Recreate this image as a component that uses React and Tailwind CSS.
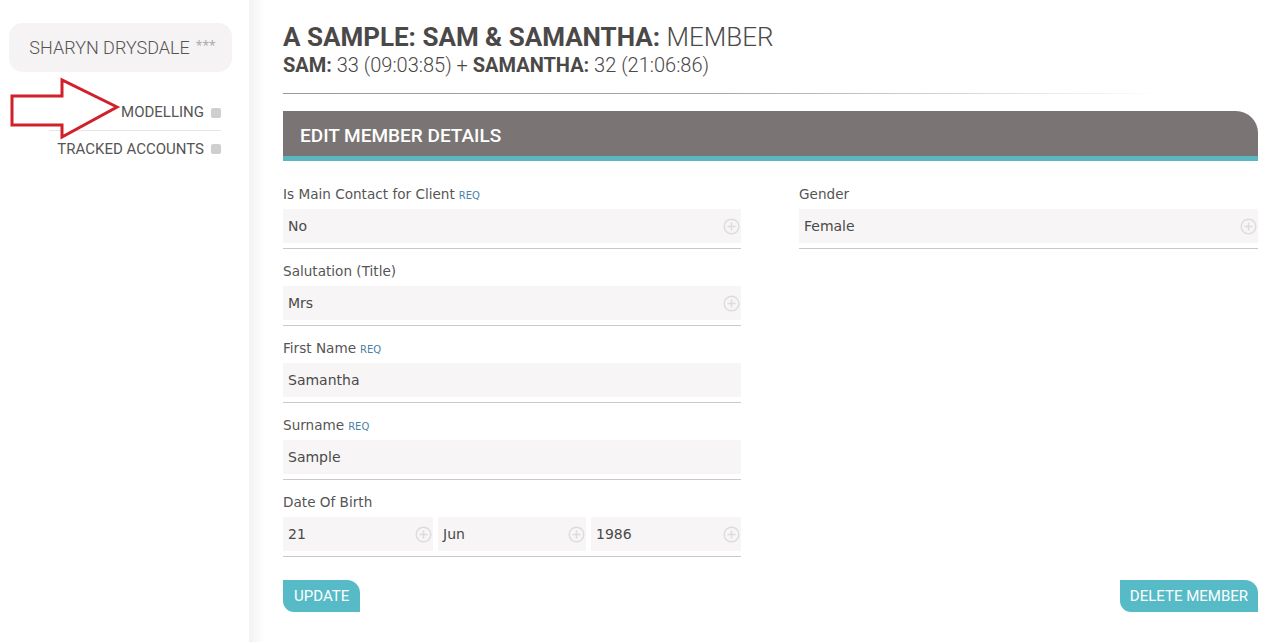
import React from "react";

const head = { fontFamily: "Roboto, 'Open Sans', sans-serif" };
const body = { fontFamily: "'DejaVu Sans', Verdana, sans-serif" };

function PlusCircle() {
  return (
    <svg width="17" height="17" viewBox="0 0 17 17" fill="none" aria-hidden="true">
      <circle cx="8.5" cy="8.5" r="7.3" stroke="#dcdcdc" strokeWidth="1.4" />
      <path d="M8.5 4.5v8M4.5 8.5h8" stroke="#dcdcdc" strokeWidth="1.4" />
    </svg>
  );
}

function Box({ value, select, className = "" }) {
  return (
    <div
      className={`h-[34px] bg-[#f7f5f5] flex items-center justify-between pl-[5px] pr-[1px] text-[14px] text-[#4a4a4a] ${className}`}
      style={body}
    >
      <span>{value}</span>
      {select && <PlusCircle />}
    </div>
  );
}

function Field({ label, req, value, select, children }) {
  return (
    <div className="mb-[14px]">
      <div className="h-[16px] leading-[16px] text-[13.6px] text-[#555] mb-[7px] whitespace-nowrap" style={body}>
        {label}
        {req && <span className="ml-[4px] text-[10px] text-[#4c7fa8]">REQ</span>}
      </div>
      <div className="border-b border-[#c9c9c9] pb-[5px]">
        {children || <Box value={value} select={select} />}
      </div>
    </div>
  );
}

function NavItem({ label, divider }) {
  return (
    <div className={`flex items-center justify-end gap-[7px] h-[36px] ${divider ? "border-b border-[#e6e6e6]" : ""}`}>
      <span className="text-[15px] text-[#555] uppercase whitespace-nowrap" style={head}>
        {label}
      </span>
      <span className="w-[10px] h-[10px] rounded-[2px] bg-[#cfcfcf]" />
    </div>
  );
}

export default function App() {
  return (
    <div className="w-[1279px] h-[642px] flex bg-white overflow-hidden">
      {/* ============ SIDEBAR ============ */}
      <aside className="relative w-[249px] shrink-0 bg-white pt-[23px] pl-[9px] pr-[17px]">
        <div className="h-[49px] rounded-[14px] bg-[#f5f3f4] flex items-center justify-center pl-[4px]">
          <span className="text-[18px] text-[#555] font-light" style={head}>
            SHARYN DRYSDALE
          </span>
          <span className="ml-[6px] text-[12px] text-[#aaa] -mt-[4px]">***</span>
        </div>
        <nav className="ml-[40px] mr-[11px] mt-[23px]">
          <NavItem label="Modelling" divider />
          <NavItem label="Tracked Accounts" />
        </nav>

        {/* red annotation arrow */}
        <svg
          className="absolute left-[8px] top-[76px]"
          width="115"
          height="66"
          viewBox="0 0 115 66"
          aria-hidden="true"
        >
          <polygon
            points="4,20 54,20 54,4 109,31 54,61 54,49 4,49"
            fill="white"
            stroke="#d2202b"
            strokeWidth="3"
            strokeLinejoin="miter"
          />
        </svg>
      </aside>

      {/* shadow strip */}
      <div className="w-[16px] shrink-0 bg-gradient-to-r from-[#f2f2f2] to-white" />

      {/* ============ MAIN ============ */}
      <main className="flex-1 pl-[18px] pr-[21px] pt-[22px]">
        <h1 className="text-[26px] leading-[31px] text-[#4b4848] font-bold" style={head}>
          A SAMPLE: SAM &amp; SAMANTHA: <span className="font-light">MEMBER</span>
        </h1>
        <p className="text-[20px] leading-[24px] text-[#4b4848] font-light" style={head}>
          <span className="font-bold">SAM:</span> 33 (09:03:85) +{" "}
          <span className="font-bold">SAMANTHA:</span> 32 (21:06:86)
        </p>
        <div className="mt-[16px] h-px w-[880px] bg-gradient-to-r from-[#9a9a9a] via-[#a8a8a8] to-transparent" />

        <div className="mt-[17px] h-[50px] bg-[#7a7574] rounded-tr-[22px] border-b-[5px] border-[#5ab6bf] flex items-center pl-[17px] pt-[6px]">
          <span className="text-[19px] text-white font-medium" style={head}>
            EDIT MEMBER DETAILS
          </span>
        </div>

        <div className="mt-[25px] flex gap-[58px]">
          <div className="w-[458px]">
            <Field label="Is Main Contact for Client" req value="No" select />
            <Field label="Salutation (Title)" value="Mrs" select />
            <Field label="First Name" req value="Samantha" />
            <Field label="Surname" req value="Sample" />
            <Field label="Date Of Birth">
              <div className="flex gap-[5px]">
                <Box value="21" select className="w-[150px]" />
                <Box value="Jun" select className="w-[148px]" />
                <Box value="1986" select className="flex-1" />
              </div>
            </Field>
          </div>
          <div className="flex-1">
            <Field label="Gender" value="Female" select />
          </div>
        </div>

        <div className="mt-[9px] flex justify-between">
          <button
            className="h-[32px] px-[11px] bg-[#56bbc7] text-white text-[15px] rounded-tr-[13px] rounded-bl-[11px]"
            style={head}
          >
            UPDATE
          </button>
          <button
            className="h-[32px] px-[10px] bg-[#56bbc7] text-white text-[15px] rounded-tr-[13px] rounded-bl-[11px]"
            style={head}
          >
            DELETE MEMBER
          </button>
        </div>
      </main>
    </div>
  );
}
